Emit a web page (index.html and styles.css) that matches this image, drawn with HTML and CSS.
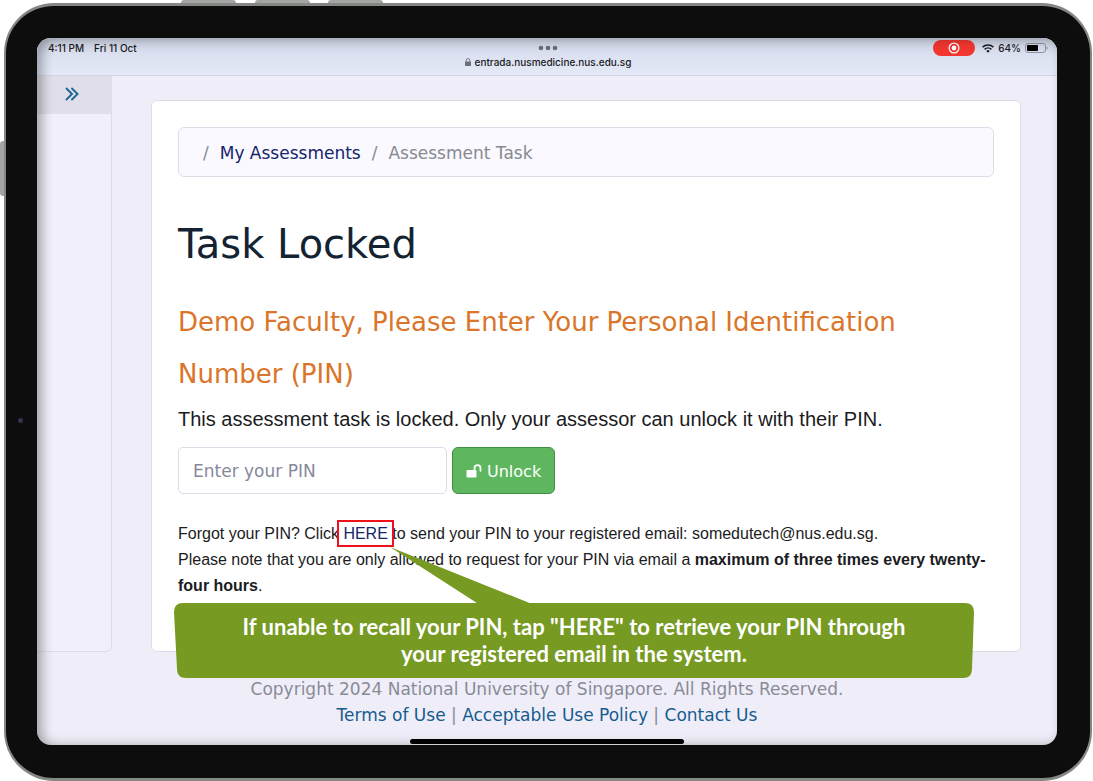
FILE: index.html
```
<!DOCTYPE html>
<html lang="en">
<head>
  <meta charset="UTF-8">
  <meta name="viewport" content="width=device-width, initial-scale=1">
  <title>Task Locked</title>
  <link rel="stylesheet" href="styles.css">
</head>
<body>
  <div class="tablet">
    <span class="key key-1"></span>
    <span class="key key-2"></span>
    <span class="key key-3"></span>
    <span class="key key-side"></span>
    <span class="camera"></span>

    <div class="screen">
      <header class="browser-bar">
        <div class="clock"><span>4:11 PM</span><span>Fri 11 Oct</span></div>
        <div class="address">
          <svg class="dots" width="20" height="6" viewBox="0 0 20 6"><circle cx="3" cy="3" r="2.3"/><circle cx="10" cy="3" r="2.3"/><circle cx="17" cy="3" r="2.3"/></svg>
          <div class="url">
            <svg width="6" height="8" viewBox="0 0 6 8"><rect y="3.4" width="6" height="4.6" rx="0.8" fill="#6b6f7b"/><path d="M1.2 4V2.4a1.8 1.8 0 0 1 3.6 0V4" fill="none" stroke="#6b6f7b" stroke-width="0.9"/></svg>
            <span>entrada.nusmedicine.nus.edu.sg</span>
          </div>
        </div>
        <div class="status">
          <span class="recording">
            <svg width="12" height="12" viewBox="0 0 12 12"><circle cx="6" cy="6" r="4.9" fill="none" stroke="#fff" stroke-width="1.2"/><circle cx="6" cy="6" r="2.4" fill="#fff"/></svg>
          </span>
          <svg width="12" height="9" viewBox="0 0 12 9" fill="none" stroke="#1a1c22" stroke-width="1.6"><path d="M0.6 3.2a7.8 7.8 0 0 1 10.8 0"/><path d="M2.6 5.4a4.9 4.9 0 0 1 6.8 0"/><path d="M4.3 6.9L6 8.8l1.7-1.9a2.5 2.5 0 0 0-3.4 0z" fill="#1a1c22" stroke="none"/></svg>
          <span>64%</span>
          <svg width="23" height="10" viewBox="0 0 23 10"><rect x="0.5" y="0.5" width="20" height="9" rx="2.6" fill="none" stroke="#8c909a"/><rect x="2" y="2" width="11" height="6" rx="1" fill="#000"/><path d="M21.6 3.4v3.2q1.2-.4 1.2-1.6t-1.2-1.6z" fill="#8c909a"/></svg>
        </div>
      </header>

      <div class="page">
        <aside class="sidebar">
          <button class="expand" type="button" aria-label="Expand sidebar">
            <svg width="14" height="14" viewBox="0 0 14 14" fill="none" stroke="#1c6796" stroke-width="1.9" stroke-linecap="round"><path d="M1.5 1.5L7 7l-5.5 5.5M7 1.5L12.5 7 7 12.5"/></svg>
          </button>
        </aside>

        <main class="card">
          <nav class="breadcrumb">
            <span>/</span>
            <a href="#">My Assessments</a>
            <span>/</span>
            <span>Assessment Task</span>
          </nav>

          <h1>Task Locked</h1>
          <h2>Demo Faculty, Please Enter Your Personal Identification Number (PIN)</h2>
          <p class="lead">This assessment task is locked. Only your assessor can unlock it with their PIN.</p>

          <form class="pin-form">
            <input type="text" placeholder="Enter your PIN" aria-label="Enter your PIN">
            <button class="unlock" type="button">
              <svg width="16" height="14" viewBox="0 0 16 14"><rect x="0.5" y="6" width="10" height="7.5" rx="1" fill="#fff"/><path d="M8.5 6.5V4.2a3 3 0 0 1 6 0v2.6" fill="none" stroke="#fff" stroke-width="1.8" stroke-linecap="round"/></svg>
              Unlock
            </button>
          </form>

          <p class="help">Forgot your PIN? Click <a class="here" href="#">HERE</a> to send your PIN to your registered email: somedutech@nus.edu.sg.<br>
          Please note that you are only allowed to request for your PIN via email a <strong>maximum of three times every twenty-four hours</strong>.</p>

          <div class="callout">
            <svg class="callout-tail" width="142" height="58" viewBox="0 0 142 58"><path d="M0 0L142 57v1H90z" fill="#779a23"/></svg>
            <svg class="callout-shape" viewBox="0 0 800 75" preserveAspectRatio="none"><path d="M9 0H791Q800 0 800 9L798 66Q798 75 789 75H12Q3 75 3 66L0 9Q0 0 9 0z" fill="#779a23"/></svg>
            <p>If unable to recall your PIN, tap "HERE" to retrieve your PIN through<br>your registered email in the system.</p>
          </div>
        </main>
      </div>

      <footer class="footer">
        <div>Copyright 2024 National University of Singapore. All Rights Reserved.</div>
        <div><a href="#">Terms of Use</a> | <a href="#">Acceptable Use Policy</a> | <a href="#">Contact Us</a></div>
      </footer>
      <span class="home-bar"></span>
    </div>
  </div>
</body>
</html>
```
FILE: styles.css
```
* {
  box-sizing: border-box;
}
body {
  margin: 0;
  min-height: 100vh;
  padding: 3px 1px 0 4px;
  display: flex;
  background: #fff;
  font-family: "DejaVu Sans", Verdana, sans-serif;
  font-size: 17px;
  color: #1b1b22;
}
a {
  text-decoration: none;
}

/* device */
.tablet {
  position: relative;
  flex: 1;
  display: flex;
  padding: 32px 33px 33px 31px;
  background: #0d0d0d;
  border: 2px solid #858785;
  border-top-width: 3px;
  border-bottom-width: 3px;
  border-radius: 50px;
}
.key {
  position: absolute;
  top: -6px;
  width: 55px;
  height: 3px;
  background: #a3a5a2;
  border-radius: 3px 3px 0 0;
}
.key-1 {
  left: 175px;
}
.key-2 {
  left: 249px;
}
.key-3 {
  left: 322px;
}
.key-side {
  top: 135px;
  left: -6px;
  width: 4px;
  height: 55px;
  border-radius: 3px 0 0 3px;
}
.camera {
  position: absolute;
  top: 412px;
  left: 12px;
  width: 5px;
  height: 5px;
  border-radius: 50%;
  background: #34324e;
}
.screen {
  position: relative;
  flex: 1;
  display: flex;
  flex-direction: column;
  overflow: hidden;
  background: #efeef8;
  border-radius: 14px;
}
.screen::after {
  content: "";
  position: absolute;
  inset: 0;
  border-radius: 14px;
  box-shadow: inset 5px 1px 12px rgba(0, 0, 0, 0.32);
  pointer-events: none;
}

/* browser bar */
.browser-bar {
  display: grid;
  grid-template-columns: 1fr auto 1fr;
  height: 38px;
  padding: 0 9px 0 11px;
  background: linear-gradient(#ccd2e2, #dce2f2 50%, #e5e9f6);
  border-bottom: 1px solid #d2d5e4;
  font-family: Inter, "Liberation Sans", sans-serif;
  font-size: 10px;
  font-weight: 500;
  line-height: 20px;
}
.clock {
  display: flex;
  gap: 10px;
}
.address {
  display: flex;
  flex-direction: column;
  align-items: center;
  padding-top: 7px;
}
.dots {
  fill: #686d7a;
}
.url {
  display: flex;
  align-items: center;
  gap: 4px;
  line-height: 22px;
}
.status {
  display: flex;
  justify-content: flex-end;
  align-items: center;
  gap: 4px;
  height: 20px;
}
.recording {
  display: flex;
  align-items: center;
  justify-content: center;
  width: 42px;
  height: 16px;
  margin-right: 3px;
  border-radius: 8px;
  background: #f23630;
}

/* page */
.page {
  flex: 1;
  display: flex;
  gap: 39px;
  padding-right: 36px;
}
.sidebar {
  width: 75px;
  background: #f0effa;
  border: 1px solid #dddce8;
  border-width: 0 1px 1px 0;
  border-radius: 0 0 6px 0;
}
.expand {
  display: flex;
  align-items: center;
  justify-content: center;
  width: 100%;
  height: 38px;
  padding: 0 4px 3px 0;
  background: #e0dfe9;
  border: none;
}
.card {
  position: relative;
  flex: 1;
  margin-top: 24px;
  padding: 26px;
  background: #fff;
  border: 1px solid #dddce8;
  border-radius: 6px;
}
.breadcrumb {
  display: flex;
  align-items: center;
  gap: 11px;
  height: 50px;
  padding: 1px 24px 0;
  background: #f9f9ff;
  border: 1px solid #dddde8;
  border-radius: 6px;
  color: #88898f;
}
.breadcrumb a,
.here {
  color: #16246a;
}
h1 {
  margin: 42px 0 27px;
  font-size: 40px;
  font-weight: normal;
  line-height: 50px;
  color: #142334;
}
h2 {
  margin: 0;
  font-size: 26px;
  font-weight: normal;
  line-height: 52px;
  color: #da7529;
}
.lead {
  margin: 6px 0 15px;
  font-family: "Liberation Sans", Arial, sans-serif;
  font-size: 20px;
  line-height: 26px;
}
.pin-form {
  display: flex;
  gap: 5px;
}
.pin-form input {
  width: 269px;
  height: 47px;
  padding: 1px 14px 0;
  font: inherit;
  border: 1px solid #dddbe8;
  border-radius: 5px;
}
.pin-form input::placeholder {
  color: #86889a;
}
.unlock {
  display: flex;
  align-items: center;
  gap: 5px;
  height: 47px;
  padding: 1px 13px 0;
  font-family: inherit;
  font-size: 16px;
  color: #fff;
  background: #5eb75f;
  border: 1px solid #3f8f42;
  border-radius: 6px;
}
.help {
  margin: 27px 0 0;
  font-family: "Liberation Sans", Arial, sans-serif;
  font-size: 16px;
  line-height: 26px;
}
.here {
  position: relative;
}
.here::after {
  content: "";
  position: absolute;
  inset: -5px -6px;
  border: 2px solid #f0101c;
}

/* callout */
.callout {
  position: absolute;
  top: 502px;
  left: 22px;
  right: 46px;
  height: 75px;
  display: flex;
  align-items: center;
  justify-content: center;
}
.callout-shape {
  position: absolute;
  width: 100%;
  height: 100%;
}
.callout-tail {
  position: absolute;
  top: -56px;
  left: 216px;
}
.callout p {
  position: relative;
  margin: 0;
  padding-bottom: 2px;
  font-family: Lato, sans-serif;
  font-size: 22px;
  font-weight: bold;
  line-height: 27px;
  text-align: center;
  color: #fff;
}

.footer {
  padding: 24px 0 17px;
  line-height: 26px;
  text-align: center;
  color: #888b96;
}
.footer a {
  color: #165c8e;
}
.home-bar {
  position: absolute;
  bottom: 1px;
  left: 50%;
  width: 274px;
  height: 5px;
  margin-left: -137px;
  border-radius: 3px;
  background: #000;
}
```
